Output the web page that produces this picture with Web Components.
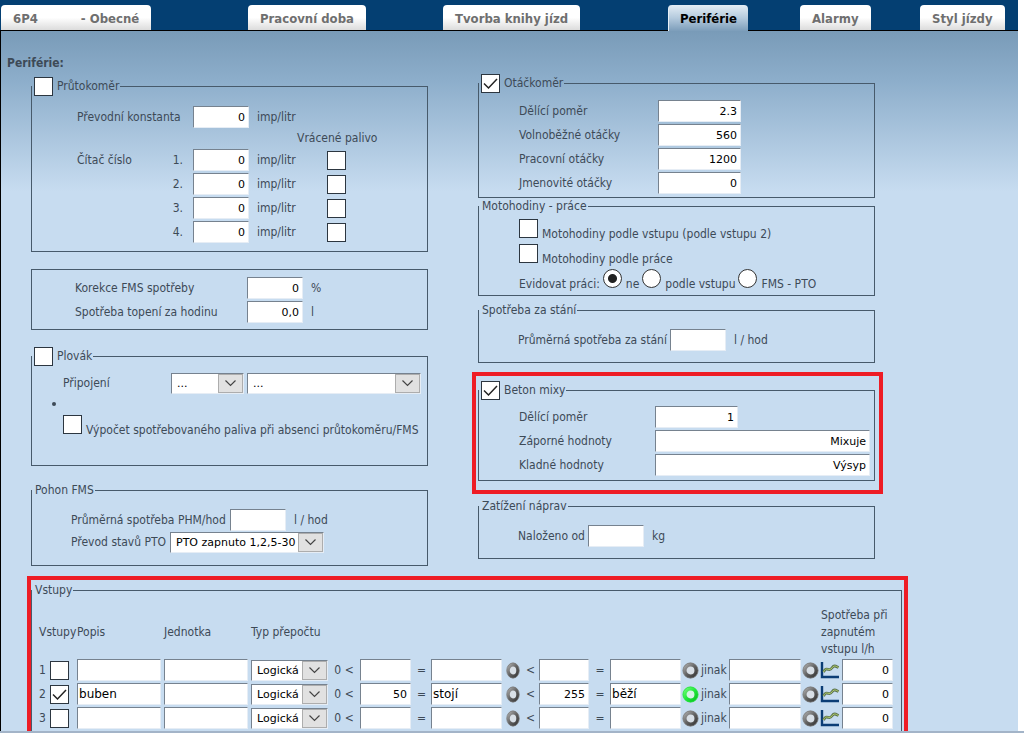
<!DOCTYPE html>
<html lang="cs">
<head>
<meta charset="utf-8">
<title>Periférie</title>
<style>
  html, body { height: 100%; margin: 0; }
  body { background: #fff; font: 12px/15px "DejaVu Sans Condensed", "DejaVu Sans", sans-serif; color: #3d4a57; }
</style>
</head>
<body>
<settings-page></settings-page>
<script>
/* Builds a class whose shadow root is filled from the markup its render() returns. */
class Base extends HTMLElement {
  connectedCallback() {
    if (this.shadowRoot) return;
    const t = document.createElement('template');
    t.innerHTML = this.render();
    this.attachShadow({ mode: 'open' }).append(t.content.cloneNode(true));
  }
  get(name, fallback = '') { return this.getAttribute(name) ?? fallback; }
}

const FIELD = `
  input.text {
    box-sizing: border-box; margin: 0; padding: 0 3px; height: 22px; min-width: 0;
    border: 1px solid; border-color: #76828f #e6edf5 #e6edf5 #76828f; border-radius: 0;
    background: #fff; color: #000; font: 11px/14px "DejaVu Sans", sans-serif; text-align: right; outline: 0;
  }`;

/* Tab strip */
customElements.define('tab-strip', class extends Base {
  render() {
    return `<style>
      :host { display: block; background: #043f72; border-bottom: 1px solid #000; padding-top: 5px; }
      nav { display: grid; grid-template-columns: 247fr 195fr 225fr 132fr 120fr 98fr; padding-left: 1px; }
    </style><nav><slot></slot></nav>`;
  }
});
customElements.define('tab-link', class extends Base {
  render() {
    return `<style>
      :host { display: block; min-width: 0; }
      a { display: inline-flex; gap: 43px; box-sizing: border-box; height: 25px; padding: 0 12px; vertical-align: top;
          border-radius: 4px 4px 0 0; background: linear-gradient(#fff 50%, #dcdcdc);
          color: #6f6f6f; font-weight: bold; font-size: 13px; line-height: 27px; text-decoration: none; white-space: nowrap; }
      :host([current]) a { color: #000; background: linear-gradient(#e4edf5, #b4cadd 50%, #7c9dba);
          margin-bottom: -1px; height: 26px; border-left: 1px solid #e8f0f7; padding: 0 11px; }
    </style><a href="#"${this.hasAttribute('current') ? ' aria-current="page"' : ''}><slot></slot></a>`;
  }
});

/* Tick box with an optional label */
customElements.define('tick-box', class extends Base {
  render() {
    const label = this.get('label');
    return `<style>
      :host { display: inline-flex; }
      label { display: flex; align-items: baseline; gap: 4px; white-space: nowrap; }
      :host([centre]) label { align-items: center; }
      .box { display: grid; }
      input, svg { grid-area: 1 / 1; }
      input { appearance: none; box-sizing: border-box; width: 19px; height: 19px; margin: 0; border: 1px solid #2c3640; background: #fff; }
      svg { width: 19px; height: 19px; fill: none; stroke: #222; stroke-width: 1.5; pointer-events: none; visibility: hidden; }
      input:checked + svg { visibility: visible; }
    </style>
    <label><span class="box"><input type="checkbox"${this.hasAttribute('checked') ? ' checked' : ''}${label ? '' : ` aria-label="${this.get('name')}"`}>
      <svg viewBox="0 0 19 19" aria-hidden="true"><path d="M3 9.5 7.5 14 16 5"/></svg></span>${label ? `<span>${label}</span>` : ''}</label>`;
  }
});

/* Round choice with its label */
customElements.define('choice-row', class extends Base {
  render() {
    const items = this.get('options').split('|');
    return `<style>
      :host { display: block; }
      div { display: flex; align-items: baseline; gap: 3px; white-space: nowrap; }
      label { display: flex; align-items: baseline; gap: 4px; }
      input { appearance: none; box-sizing: border-box; width: 19px; height: 19px; margin: 0; border: 1px solid #333; border-radius: 50%; background: #fff; }
      input:checked { background: radial-gradient(circle, #222 4px, #fff 5px); }
    </style><div role="radiogroup" aria-label="${this.get('label')}"><span>${this.get('label')}</span>
      ${items.map((o, i) => `<label><input type="radio" name="r"${i ? '' : ' checked'}><span>${o}</span></label>`).join('')}</div>`;
  }
});

/* Label, text box and unit on one line */
customElements.define('text-field', class extends Base {
  render() {
    return `<style>
      :host { display: flex; align-items: center; height: var(--row, 24px); white-space: nowrap; }
      label { flex: none; width: var(--label, 0); }
      input.text { width: var(--box, 56px); }
      span { margin-left: 8px; }
      ${FIELD}
    </style>
    ${this.hasAttribute('label') ? `<label for="f">${this.get('label')}</label>` : ''}
    <input class="text" id="f" type="text" value="${this.get('value')}"${this.hasAttribute('name') ? ` aria-label="${this.get('name')}"` : ''}>
    ${this.hasAttribute('unit') ? `<span>${this.get('unit')}</span>` : ''}`;
  }
});

/* Drop-down list */
customElements.define('pick-list', class extends Base {
  render() {
    return `<style>
      :host { display: grid; height: 21px; }
      select, svg { grid-area: 1 / 1; }
      select { appearance: none; box-sizing: border-box; width: 100%; height: 21px; margin: 0; padding: 1px 24px 0 5px; border: 1px solid;
        border-color: #76828f #e6edf5 #e6edf5 #76828f; border-radius: 0; background: #fff; color: #000; font: 11px/14px "DejaVu Sans", sans-serif; }
      svg { justify-self: end; width: 25px; height: 19px; margin: 1px 1px 0 0; pointer-events: none; }
    </style>
    <select aria-label="${this.get('name')}"><option>${this.get('value')}</option></select>
    <svg viewBox="0 0 25 19" aria-hidden="true"><rect x=".5" y=".5" width="24" height="18" fill="#e1e1e1" stroke="#adadad"/>
      <path d="M7.5 6.5l5 5 5-5" fill="none" stroke="#444" stroke-width="1.2"/></svg>`;
  }
});

/* Framed group with a caption or a tick box in its frame */
customElements.define('group-box', class extends Base {
  render() {
    const c = this.get('caption');
    const tick = this.hasAttribute('tick');
    return `<style>
      :host { display: block; position: relative; }
      fieldset { margin: 0; min-width: 0; border: 1px solid #475a6b; padding: 0; }
      .body { padding: var(--pad, 0); }
      legend { padding: 0 1px 0 3px; display: block; height: 15px; white-space: nowrap; }
      legend.tick { height: 19px; padding-left: 2px; }
      :host([marked])::after { content: ""; position: absolute; inset: var(--mark); border: 4px solid #ee1c25; pointer-events: none; }
    </style><fieldset>
      ${c ? `<legend class="${tick ? 'tick' : ''}">${tick ? `<tick-box centre label="${c}"${this.hasAttribute('checked') ? ' checked' : ''}></tick-box>` : c}</legend>` : ''}
      <div class="body"><slot></slot></div></fieldset>`;
  }
});

/* Round state lamp */
customElements.define('state-lamp', class extends Base {
  render() {
    const on = this.hasAttribute('on');
    return `<style>
      :host { display: inline-block; vertical-align: middle; }
      button { display: block; padding: 0; border: 0; background: none; }
      svg { display: block; width: 17px; height: 17px; }
      :host([narrow]) svg { width: 14px; }
    </style><button type="button" aria-label="Stav"><svg viewBox="0 0 17 17" preserveAspectRatio="none">
      <defs><linearGradient id="g" x1="0" y1="0" x2="1" y2="1">
        <stop offset="0" stop-color="${on ? '#6dfb74' : '#a8a8a8'}"/><stop offset=".5" stop-color="${on ? '#1fe83a' : '#626262'}"/><stop offset="1" stop-color="${on ? '#0cc322' : '#3a3a3a'}"/></linearGradient></defs>
      <circle cx="8.5" cy="8.5" r="5.8" fill="${on ? '#d4f2e4' : '#d8dfe6'}" stroke="url(#g)" stroke-width="3.7"/>
      <circle cx="8.5" cy="8.5" r="7.6" fill="none" stroke="${on ? '#1fe23a' : '#777'}" stroke-width=".8"/></svg></button>`;
  }
});

/* Small line chart button */
customElements.define('chart-button', class extends Base {
  render() {
    return `<style>
      :host { display: inline-block; vertical-align: middle; }
      button { display: block; padding: 0; border: 0; background: none; }
      svg { display: block; }
    </style><button type="button" aria-label="Graf"><svg width="20" height="18" viewBox="0 0 20 18">
      <path d="M2 1v15h17" fill="none" stroke="#0b3d75" stroke-width="2.4"/>
      <path d="M3.5 11 C5.500 7 6.500 8 9 8.500 C12 9 12 5 14.500 5 C16 5 16.500 5.500 18.500 6.500" fill="none" stroke="#5c7350" stroke-width="2.8"/>
      <path d="M3.5 11 C5.500 7 6.500 8 9 8.500 C12 9 12 5 14.500 5 C16 5 16.500 5.500 18.500 6.500" fill="none" stroke="#b5cf6a" stroke-width="1"/></svg></button>`;
  }
});

/* Table of the inputs; the last row is an empty spare one */
customElements.define('inputs-table', class extends Base {
  render() {
    const cols = [11, 27, 87, 87, 77, 32, 52, 19, 72, 19, 17, 51, 20, 72, 47, 73, 18, 22, 52];
    const rows = [{ n: 1 }, { n: 2, on: true, name: 'buben', a: '50', av: 'stojí', b: '255', bv: 'běží' }, { n: 3 }, { spare: true }];
    const box = (name, v = '', cls = '') => `<td><input class="text ${cls}" type="text" aria-label="${name}" value="${v}"></td>`;
    return `<style>
      :host { display: block; }
      table { border-collapse: collapse; table-layout: fixed; width: 855px; }
      th { font-weight: normal; text-align: left; padding: 0; height: 52px; line-height: 17px; white-space: nowrap; }
      th:last-child { white-space: normal; padding-left: 1px; }
      td { padding: 0; height: 24px; white-space: nowrap; }
      td.mid { text-align: center; }
      td.lamp { display: flex; align-items: center; gap: 2px; }
      tick-box, pick-list { vertical-align: middle; }
      ${FIELD}
      input.text { display: block; width: calc(100% - 1px); }
      input.name { width: calc(100% - 3px); }
      input.left { text-align: left; font-size: 12px; padding: 0 1px; }
    </style><table><colgroup>${cols.map(w => `<col style="width:${w}px">`).join('')}</colgroup>
    <thead><tr><th colspan="2">Vstupy</th><th>Popis</th><th>Jednotka</th><th>Typ přepočtu</th><td colspan="12"></td><th colspan="2">Spotřeba při zapnutém vstupu l/h</th></tr></thead>
    <tbody>${rows.map(({ n = '', on, name, a, av, b, bv, spare }) => {
      const say = s => spare ? '' : s;
      return `<tr>
      <td>${n}</td><td><tick-box name="Vstup ${n}"${on ? ' checked' : ''}></tick-box></td>
      ${box('Popis', name, 'left name')}${box('Jednotka', '', 'left name')}
      <td><pick-list name="Typ přepočtu" value="${say('Logická')}"></pick-list></td>
      <td class="mid">${say('0 &lt;')}</td>${box('Mez 1', a)}<td class="mid">${say('=')}</td>${box('Hodnota 1', av, 'left')}
      <td class="mid"><state-lamp narrow></state-lamp></td><td class="mid">${say('&lt;')}</td>
      ${box('Mez 2', b)}<td class="mid">${say('=')}</td>${box('Hodnota 2', bv, 'left')}
      <td class="lamp"><state-lamp${on ? ' on' : ''}></state-lamp>${say('jinak')}</td>${box('Jinak', '', 'left')}
      <td><state-lamp></state-lamp></td><td><chart-button></chart-button></td>${box('Spotřeba', say('0'))}</tr>`;
    }).join('')}</tbody></table>`;
  }
});

customElements.define('settings-page', class extends Base {
  render() {
    const counter = n => `<span>${n === 1 ? 'Čítač číslo' : ''}</span><span class="num">${n}.</span>
      <text-field name="Čítač ${n}" value="0" unit="imp/litr"></text-field><tick-box name="Vrácené palivo ${n}"></tick-box>`;
    return `<style>
      :host { display: flex; flex-direction: column; height: 100vh; box-sizing: border-box; border-bottom: 2px solid #a3b4c8; }
      .view { flex: 1; min-height: 0; overflow: auto; scrollbar-width: none; padding-right: 6px; }
      main { min-height: 100%; box-sizing: border-box; padding: 24px 0 24px 6px; border-left: 1px solid #000;
        background: #c7dcf0 linear-gradient(#799bb8, #8daecb 50px, #c7dcf0 160px) no-repeat; }
      h1 { margin: 0; font-size: 12px; line-height: 17px; }
      .columns { display: grid; grid-template-columns: 397fr 397fr 93fr; column-gap: 50px; padding: 2px 0 0 24px; }
      .left, .right { display: flex; flex-direction: column; gap: 18px; min-width: 0; }
      .left { padding-top: 3px; gap: 17px; }
      .right .pair { display: grid; gap: 1px; margin-bottom: -11px; }

      .flow { --pad: 9px 0 7px 45px; }
      .counters { display: grid; grid-template-columns: 94px 12px 144px auto; grid-template-rows: 24px 19px repeat(4, 24px); align-items: center; justify-content: start; }
      .counters .num { text-align: right; }
      .counters text-field { margin-left: 10px; }
      .counters .wide { grid-column: 1 / 3; white-space: nowrap; }
      .counters .head { grid-column: 3 / 5; justify-self: end; width: 79px; margin-right: -30px; line-height: 19px; white-space: nowrap; }
      .fms { --pad: 6px 0 5px 43px; --label: 172px; }
      .float { --pad: 5px 6px 27px 31px; }
      .link { display: grid; grid-template-columns: 108px 73px 1fr; align-items: center; height: 24px; }
      .link pick-list:last-child { margin-left: 3px; }
      ul { margin: 0; padding: 0 0 4px 3px; }
      li { height: 16px; line-height: 16px; }
      .drive { --pad: 11px 0 12px 39px; --row: 22px; --label: 159px; }
      .inline { display: flex; align-items: center; height: 22px; }
      .inline span { width: 99px; white-space: nowrap; }
      .inline pick-list { width: 154px; }

      .revs { --pad: 6px 0 2px 40px; --label: 139px; --box: 83px; }
      .hours { --pad: 5px 0 1px 40px; }
      .hours > * { display: flex; height: 25px; }
      .idle { --pad: 10px 0 10px 39px; --label: 152px; }
      .axle { --pad: 10px 0 10px 39px; --label: 70px; }
      .mix { --pad: 5px 4px 3px 40px; --label: 136px; --box: 83px; --mark: -9px -8px -13px -6px; }
      .mix .full { --box: 100%; }
      .table { width: fit-content; margin: 17px 0 0 24px; --pad: 8px 7px 8px 7px; --mark: -7px -6px -7px -4px; }
    </style>
    <div class="view">
      <tab-strip>
        <tab-link><span>6P4</span><span>- Obecné</span></tab-link>
        <tab-link>Pracovní doba</tab-link>
        <tab-link>Tvorba knihy jízd</tab-link>
        <tab-link current>Periférie</tab-link>
        <tab-link>Alarmy</tab-link>
        <tab-link>Styl jízdy</tab-link>
      </tab-strip>
      <main>
        <h1>Periférie:</h1>
        <div class="columns">
          <div class="left">
            <group-box class="flow" caption="Průtokoměr" tick>
              <div class="counters">
                <span class="wide">Převodní konstanta</span>
                <text-field name="Převodní konstanta" value="0" unit="imp/litr"></text-field><span></span>
                <span class="head">Vrácené palivo</span>
                ${[1, 2, 3, 4].map(counter).join('')}
              </div>
            </group-box>
            <group-box class="fms">
              <text-field label="Korekce FMS spotřeby" value="0" unit="%"></text-field>
              <text-field label="Spotřeba topení za hodinu" value="0,0" unit="l"></text-field>
            </group-box>
            <group-box class="float" caption="Plovák" tick>
              <div class="link"><span>Připojení</span><pick-list name="Připojení" value="..."></pick-list><pick-list name="Typ připojení" value="..."></pick-list></div>
              <ul><li></li></ul>
              <tick-box label="Výpočet spotřebovaného paliva při absenci průtokoměru/FMS"></tick-box>
            </group-box>
            <group-box class="drive" caption="Pohon FMS">
              <text-field label="Průměrná spotřeba PHM/hod" unit="l / hod"></text-field>
              <div class="inline"><span>Převod stavů PTO</span><pick-list name="Převod stavů PTO" value="PTO zapnuto 1,2,5-30"></pick-list></div>
            </group-box>
          </div>
          <div class="right">
            <div class="pair">
              <group-box class="revs" caption="Otáčkoměr" tick checked>
                <text-field label="Dělící poměr" value="2.3"></text-field>
                <text-field label="Volnoběžné otáčky" value="560"></text-field>
                <text-field label="Pracovní otáčky" value="1200"></text-field>
                <text-field label="Jmenovité otáčky" value="0"></text-field>
              </group-box>
              <group-box class="hours" caption="Motohodiny - práce">
                <tick-box label="Motohodiny podle vstupu (podle vstupu 2)"></tick-box>
                <tick-box label="Motohodiny podle práce"></tick-box>
                <choice-row label="Evidovat práci:" options="ne|podle vstupu|FMS - PTO"></choice-row>
              </group-box>
            </div>
            <group-box class="idle" caption="Spotřeba za stání">
              <text-field label="Průměrná spotřeba za stání" unit="l / hod"></text-field>
            </group-box>
            <group-box class="mix" caption="Beton mixy" tick checked marked>
              <text-field label="Dělící poměr" value="1"></text-field>
              <text-field class="full" label="Záporné hodnoty" value="Mixuje"></text-field>
              <text-field class="full" label="Kladné hodnoty" value="Výsyp"></text-field>
            </group-box>
            <group-box class="axle" caption="Zatížení náprav">
              <text-field label="Naloženo od" unit="kg"></text-field>
            </group-box>
          </div>
        </div>
        <group-box class="table" caption="Vstupy" marked><inputs-table></inputs-table></group-box>
      </main>
    </div>`;
  }
});
</script>
</body>
</html>
